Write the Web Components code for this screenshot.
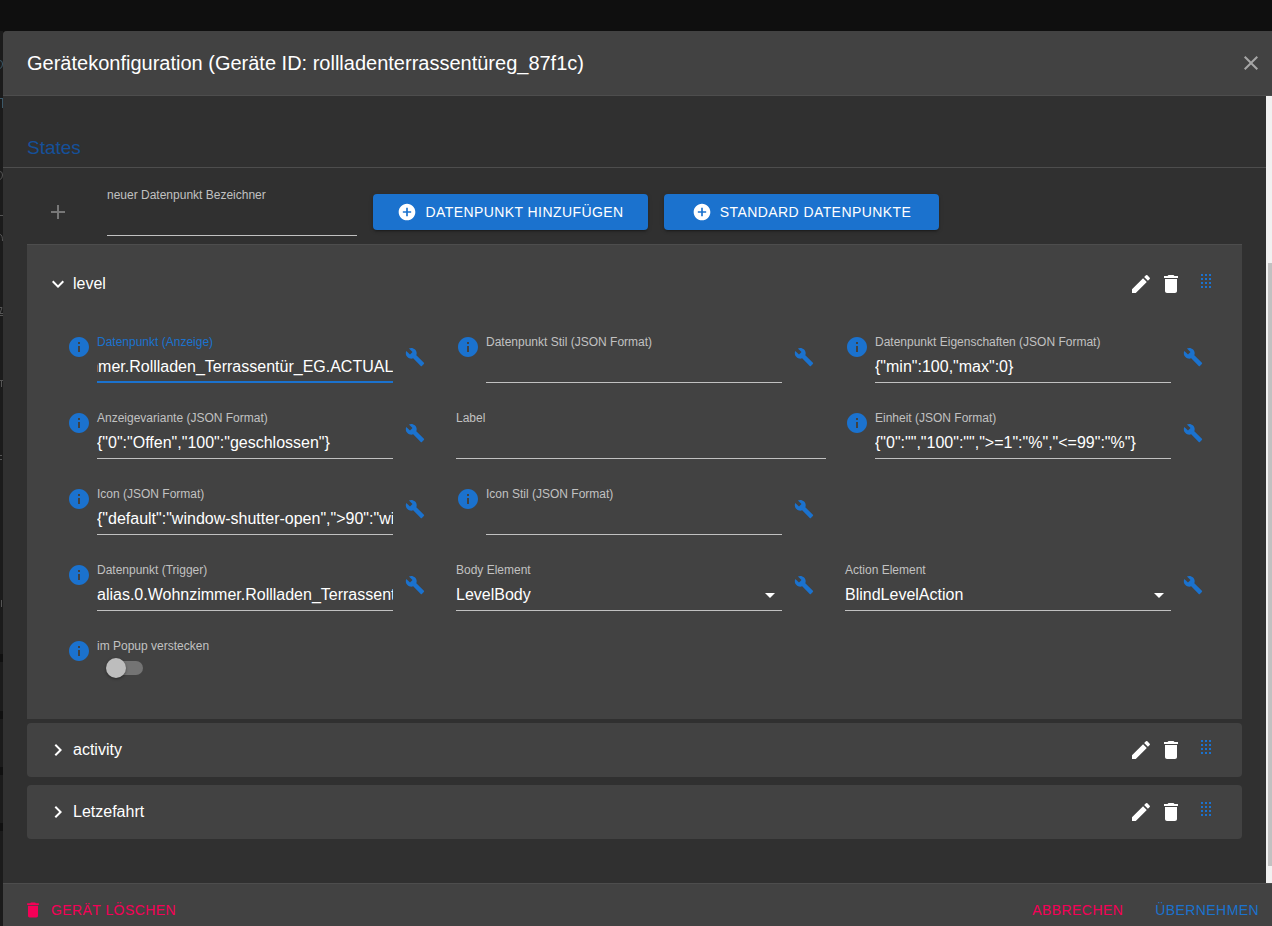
<!DOCTYPE html>
<html lang="de">
<head>
<meta charset="utf-8">
<meta name="viewport" content="width=device-width, initial-scale=1">
<title>Gerätekonfiguration</title>
<style>
  :root {
    --primary: #1b72ce;
    --danger: #f50057;
    --paper: #424242;
    --surface: #303030;
    --line: #4d4d4d;
    --muted: #c1c1c1;
  }
  html, body { height: 100%; }
  body {
    margin: 0;
    overflow: hidden;
    background: #0f0f0f;
    color: #fff;
    font: 16px/20px "Liberation Sans", Arial, sans-serif;
  }
</style>
</head>
<body>
<app-shell>
  <config-dialog>
    <span slot="title">Gerätekonfiguration (Geräte ID: rollladenterrassentüreg_87f1c)</span>
    <section-title>States</section-title>
    <add-bar></add-bar>
    <state-panel name="level" open>
      <text-field label="Datenpunkt (Anzeige)" value="alias.0.Wohnzimmer.Rollladen_Terrassentür_EG.ACTUAL" info tool active></text-field>
      <text-field label="Datenpunkt Stil (JSON Format)" info tool></text-field>
      <text-field label="Datenpunkt Eigenschaften (JSON Format)" value='{"min":100,"max":0}' info tool></text-field>
      <text-field label="Anzeigevariante (JSON Format)" value='{"0":"Offen","100":"geschlossen"}' info tool></text-field>
      <text-field label="Label"></text-field>
      <text-field label="Einheit (JSON Format)" value='{"0":"","100":"","&gt;=1":"%","&lt;=99":"%"}' info tool></text-field>
      <text-field label="Icon (JSON Format)" value='{"default":"window-shutter-open","&gt;90":"window-shutter"}' info tool></text-field>
      <text-field label="Icon Stil (JSON Format)" info tool></text-field>
      <text-field label="Datenpunkt (Trigger)" value="alias.0.Wohnzimmer.Rollladen_Terrassentür_EG.ACTUAL" info tool first></text-field>
      <text-field label="Body Element" value="LevelBody" select tool></text-field>
      <text-field label="Action Element" value="BlindLevelAction" select tool></text-field>
      <switch-field label="im Popup verstecken"></switch-field>
    </state-panel>
    <state-panel name="activity"></state-panel>
    <state-panel name="Letzefahrt"></state-panel>
    <flat-button slot="start" tone="danger" icon="trash">Gerät löschen</flat-button>
    <flat-button slot="end" tone="danger">Abbrechen</flat-button>
    <flat-button slot="end">Übernehmen</flat-button>
  </config-dialog>
</app-shell>

<script>
const ICONS = {
  close: 'M19 6.41 17.59 5 12 10.59 6.41 5 5 6.41 10.59 12 5 17.59 6.41 19 12 13.41 17.59 19 19 17.59 13.41 12z',
  add: 'M19 13h-6v6h-2v-6H5v-2h6V5h2v6h6v2z',
  addCircle: 'M12 2C6.48 2 2 6.48 2 12s4.48 10 10 10 10-4.48 10-10S17.52 2 12 2zm5 11h-4v4h-2v-4H7v-2h4V7h2v4h4v2z',
  info: 'M12 2C6.48 2 2 6.48 2 12s4.48 10 10 10 10-4.48 10-10S17.52 2 12 2zm1 15h-2v-6h2v6zm0-8h-2V7h2v2z',
  wrench: 'M22.7 19l-9.1-9.1c.9-2.3.4-5-1.5-6.9-2-2-5-2.4-7.4-1.3L9 6 6 9 1.6 4.7C.4 7.1.9 10.1 2.9 12.1c1.9 1.9 4.6 2.4 6.9 1.5l9.1 9.1c.4.4 1 .4 1.4 0l2.3-2.3c.5-.4.5-1.1.1-1.4z',
  pencil: 'M3 17.25V21h3.75L17.81 9.94l-3.75-3.75L3 17.25zM20.71 7.04c.39-.39.39-1.02 0-1.41l-2.34-2.34a.9959.9959 0 0 0-1.41 0l-1.83 1.83 3.75 3.75 1.83-1.83z',
  trash: 'M6 19c0 1.1.9 2 2 2h8c1.1 0 2-.9 2-2V7H6v12zM19 4h-3.5l-1-1h-5l-1 1H5v2h14V4z',
  down: 'M7.41 8.59 12 13.17l4.59-4.58L18 10l-6 6-6-6 1.41-1.41z',
  right: 'M8.59 16.59 13.17 12 8.59 7.41 10 6l6 6-6 6-1.41-1.41z',
  drop: 'M7 10l5 5 5-5z'
};
const icon = (name, size = 24) =>
  `<svg width="${size}" height="${size}" viewBox="0 0 24 24" fill="currentColor" aria-hidden="true"><path d="${ICONS[name]}"/></svg>`;
const esc = s => (s || '').replace(/&/g, '&amp;').replace(/"/g, '&quot;').replace(/</g, '&lt;');

const RESET = `
  *, *::before { box-sizing: border-box; }
  svg { display: block; flex: none; }
  button { display: flex; align-items: center; margin: 0; padding: 0; border: 0; background: none; color: inherit; font: inherit; cursor: pointer; }
`;
const FIELD = `
  label { display: block; font-size: 12px; line-height: 14px; color: var(--muted); white-space: nowrap; }
  input[type=text], select {
    display: block; width: 100%; height: 34px; margin: 0; padding: 2px 0 0; border: 0; border-radius: 0;
    border-bottom: 1px solid var(--muted); outline: 0; background: none; color: #fff; font: inherit; appearance: none;
  }
`;

class Base extends HTMLElement {
  connectedCallback() {
    if (this.shadowRoot) return;
    this.attachShadow({ mode: 'open' }).innerHTML = `<style>${RESET}${this.css()}</style>${this.html()}`;
    this.ready();
  }
  css() { return ''; }
  html() { return '<slot></slot>'; }
  ready() {}
}

/* Dimmed application behind the dialog: only a sliver of it stays visible. */
customElements.define('app-shell', class extends Base {
  css() { return `
    :host { display: flex; height: 100vh; padding-top: 31px; }
    .behind { flex: none; width: 3px; background: #1b1b1b; color: #555; }
    ::slotted(*) { flex: 1; min-width: 0; }`; }
  html() { return `
    <div class="behind"><svg width="3" height="895" fill="none" stroke="currentColor" aria-hidden="true">
      <path stroke="#3c5868" d="M0 29.500Q2.500 29.500 2.500 33T0 37.500M0 67.500H3M2.500 68V77"/>
      <path d="M0 140.500Q2.500 140.500 2.500 144T0 148.500M0 184.500H3M0 203.500Q2.500 203.500 2.500 210M0 276.500H2L0 282.500H3M0 349.500H3M1.500 350V356M0 424.500H2M0 428.500H2M1.500 569V576M0 284.500H3"/>
      <path stroke="#101010" stroke-width="8" d="M0 627H3M0 684H3M0 740H3M0 796H3"/>
    </svg></div>
    <slot></slot>`; }
});

customElements.define('config-dialog', class extends Base {
  css() { return `
    :host { display: flex; flex-direction: column; height: calc(100vh - 21px); background: var(--surface); border-radius: 4px 0 0 0; overflow: hidden; }
    header { display: flex; align-items: center; justify-content: space-between; height: 65px; padding: 0 9px 0 24px; background: var(--paper); border-bottom: 1px solid var(--line); }
    h1 { margin: 0; font-size: 20px; line-height: 32px; font-weight: 400; white-space: nowrap; }
    .close { color: #a6a6a6; }
    .body { flex: 1; min-height: 0; display: flex; }
    main { flex: 1; min-width: 0; padding-top: 36px; }
    .scroll { display: flex; width: 6px; padding: 167px 0 17px 2px; background: #f1f1f1; }
    .thumb { flex: 1; background: #c1c1c1; }
    footer { display: flex; align-items: center; justify-content: space-between; height: 53px; padding: 0 13px 0 20px; background: var(--paper); border-top: 1px solid var(--line); }
    .end { display: flex; gap: 32px; }`; }
  html() { return `
    <header><h1><slot name="title"></slot></h1><button class="close" aria-label="Schließen">${icon('close')}</button></header>
    <div class="body"><main><slot></slot></main><div class="scroll" aria-hidden="true"><div class="thumb"></div></div></div>
    <footer><slot name="start"></slot><div class="end"><slot name="end"></slot></div></footer>`; }
});

customElements.define('section-title', class extends Base {
  css() { return `
    :host { display: block; padding: 4px 24px 7px; border-bottom: 1px solid var(--line); }
    h2 { margin: 0; color: #15509a; font-size: 19px; line-height: 24px; font-weight: 400; }`; }
  html() { return '<h2><slot></slot></h2>'; }
});

customElements.define('add-bar', class extends Base {
  css() { return FIELD + `
    :host { display: flex; align-items: center; gap: 16px; padding: 20px 24px 8px 43px; }
    .plus { margin-right: 21px; color: #777; }
    .field { width: 250px; }
    .solid { justify-content: center; gap: 8px; width: 275px; height: 36px; border-radius: 4px; background: var(--primary);
      font-size: 14px; text-transform: uppercase; letter-spacing: 0.03em; white-space: nowrap;
      box-shadow: 0 3px 1px -2px rgba(0,0,0,.2), 0 2px 2px rgba(0,0,0,.14), 0 1px 5px rgba(0,0,0,.12); }`; }
  html() { return `
    <button class="plus" aria-label="Hinzufügen">${icon('add')}</button>
    <div class="field"><label for="n">neuer Datenpunkt Bezeichner</label><input id="n" type="text"></div>
    <button class="solid">${icon('addCircle', 20)}Datenpunkt hinzufügen</button>
    <button class="solid">${icon('addCircle', 20)}Standard Datenpunkte</button>`; }
});

customElements.define('state-panel', class extends Base {
  css() { return `
    :host { display: block; margin: 0 24px 8px; background: var(--paper); border-radius: 4px; }
    :host([open]) { margin-bottom: 4px; padding: 12px 0 34px; border-top: 1px solid var(--line); border-radius: 0; }
    .head { display: flex; align-items: center; height: 54px; padding: 0 31px 0 19px; }
    .toggle { flex: 1; gap: 3px; }
    .tools { display: flex; align-items: center; gap: 6px; }
    .grip { align-self: flex-start; margin-left: 12px; padding: 2px 0; color: var(--primary); cursor: grab; }
    .grid { display: grid; grid-template-columns: repeat(3, 1fr); gap: 28px 19px; padding: 24px 27px 0 40px; }
    ::slotted([first]) { grid-column: 1; }`; }
  html() {
    const open = this.hasAttribute('open');
    let dots = '';
    for (let r = 0; r < 4; r++) for (let c = 0; c < 3; c++) dots += `M${c * 4} ${r * 4}h2v2h-2z`;
    return `
    <div class="head">
      <button class="toggle" aria-expanded="${open}">${icon(open ? 'down' : 'right')}<span>${this.getAttribute('name')}</span></button>
      <div class="tools">
        <button aria-label="Bearbeiten">${icon('pencil')}</button>
        <button aria-label="Löschen">${icon('trash')}</button>
        <button class="grip" aria-label="Verschieben"><svg width="10" height="14" fill="currentColor" aria-hidden="true"><path d="${dots}"/></svg></button>
      </div>
    </div>
    ${open ? '<div class="grid"><slot></slot></div>' : ''}`;
  }
});

customElements.define('text-field', class extends Base {
  css() { return FIELD + `
    :host { display: flex; align-items: flex-start; min-width: 0; }
    .info { flex: none; width: 30px; color: var(--primary); }
    .field { position: relative; flex: 1; min-width: 0; }
    .tool { flex: none; padding: 12px; color: var(--primary); }
    .drop { position: absolute; right: 0; bottom: 4px; pointer-events: none; }
    :host([active]) label { color: var(--primary); }
    :host([active]) input[type=text] { border-color: var(--primary); box-shadow: inset 0 -1px var(--primary); }`; }
  html() {
    const has = a => this.hasAttribute(a), value = esc(this.getAttribute('value'));
    return `
    ${has('info') ? `<span class="info">${icon('info')}</span>` : ''}
    <div class="field"><label for="f">${this.getAttribute('label')}</label>${has('select')
      ? `<select id="f"><option>${value}</option></select><span class="drop">${icon('drop')}</span>`
      : `<input id="f" type="text" value="${value}">`}</div>
    ${has('tool') ? `<button class="tool" aria-label="Editor öffnen">${icon('wrench', 20)}</button>` : ''}`;
  }
  ready() {
    if (this.hasAttribute('active')) {
      const input = this.shadowRoot.querySelector('input');
      input.scrollLeft = input.scrollWidth;
    }
  }
});

customElements.define('switch-field', class extends Base {
  css() { return FIELD + `
    :host { display: flex; align-items: flex-start; }
    .info { flex: none; width: 30px; color: var(--primary); }
    input { display: flex; align-items: center; appearance: none; width: 34px; height: 14px; margin: 8px 0 10px 12px; border-radius: 7px; background: #747474; cursor: pointer; }
    input::before { content: ""; flex: none; width: 20px; height: 20px; margin-left: -3px; border-radius: 50%; background: #bdbdbd; box-shadow: 0 1px 3px rgba(0,0,0,.4); }`; }
  html() { return `
    <span class="info">${icon('info')}</span>
    <div><label for="s">${this.getAttribute('label')}</label><input id="s" type="checkbox" role="switch"></div>`; }
});

customElements.define('flat-button', class extends Base {
  css() { return `
    :host { display: block; color: var(--primary); }
    :host([tone=danger]) { color: var(--danger); }
    button { gap: 8px; height: 36px; font-size: 14px; text-transform: uppercase; letter-spacing: 0.03em; white-space: nowrap; }`; }
  html() {
    const name = this.getAttribute('icon');
    return `<button>${name ? icon(name, 20) : ''}<slot></slot></button>`;
  }
});
</script>
</body>
</html>
